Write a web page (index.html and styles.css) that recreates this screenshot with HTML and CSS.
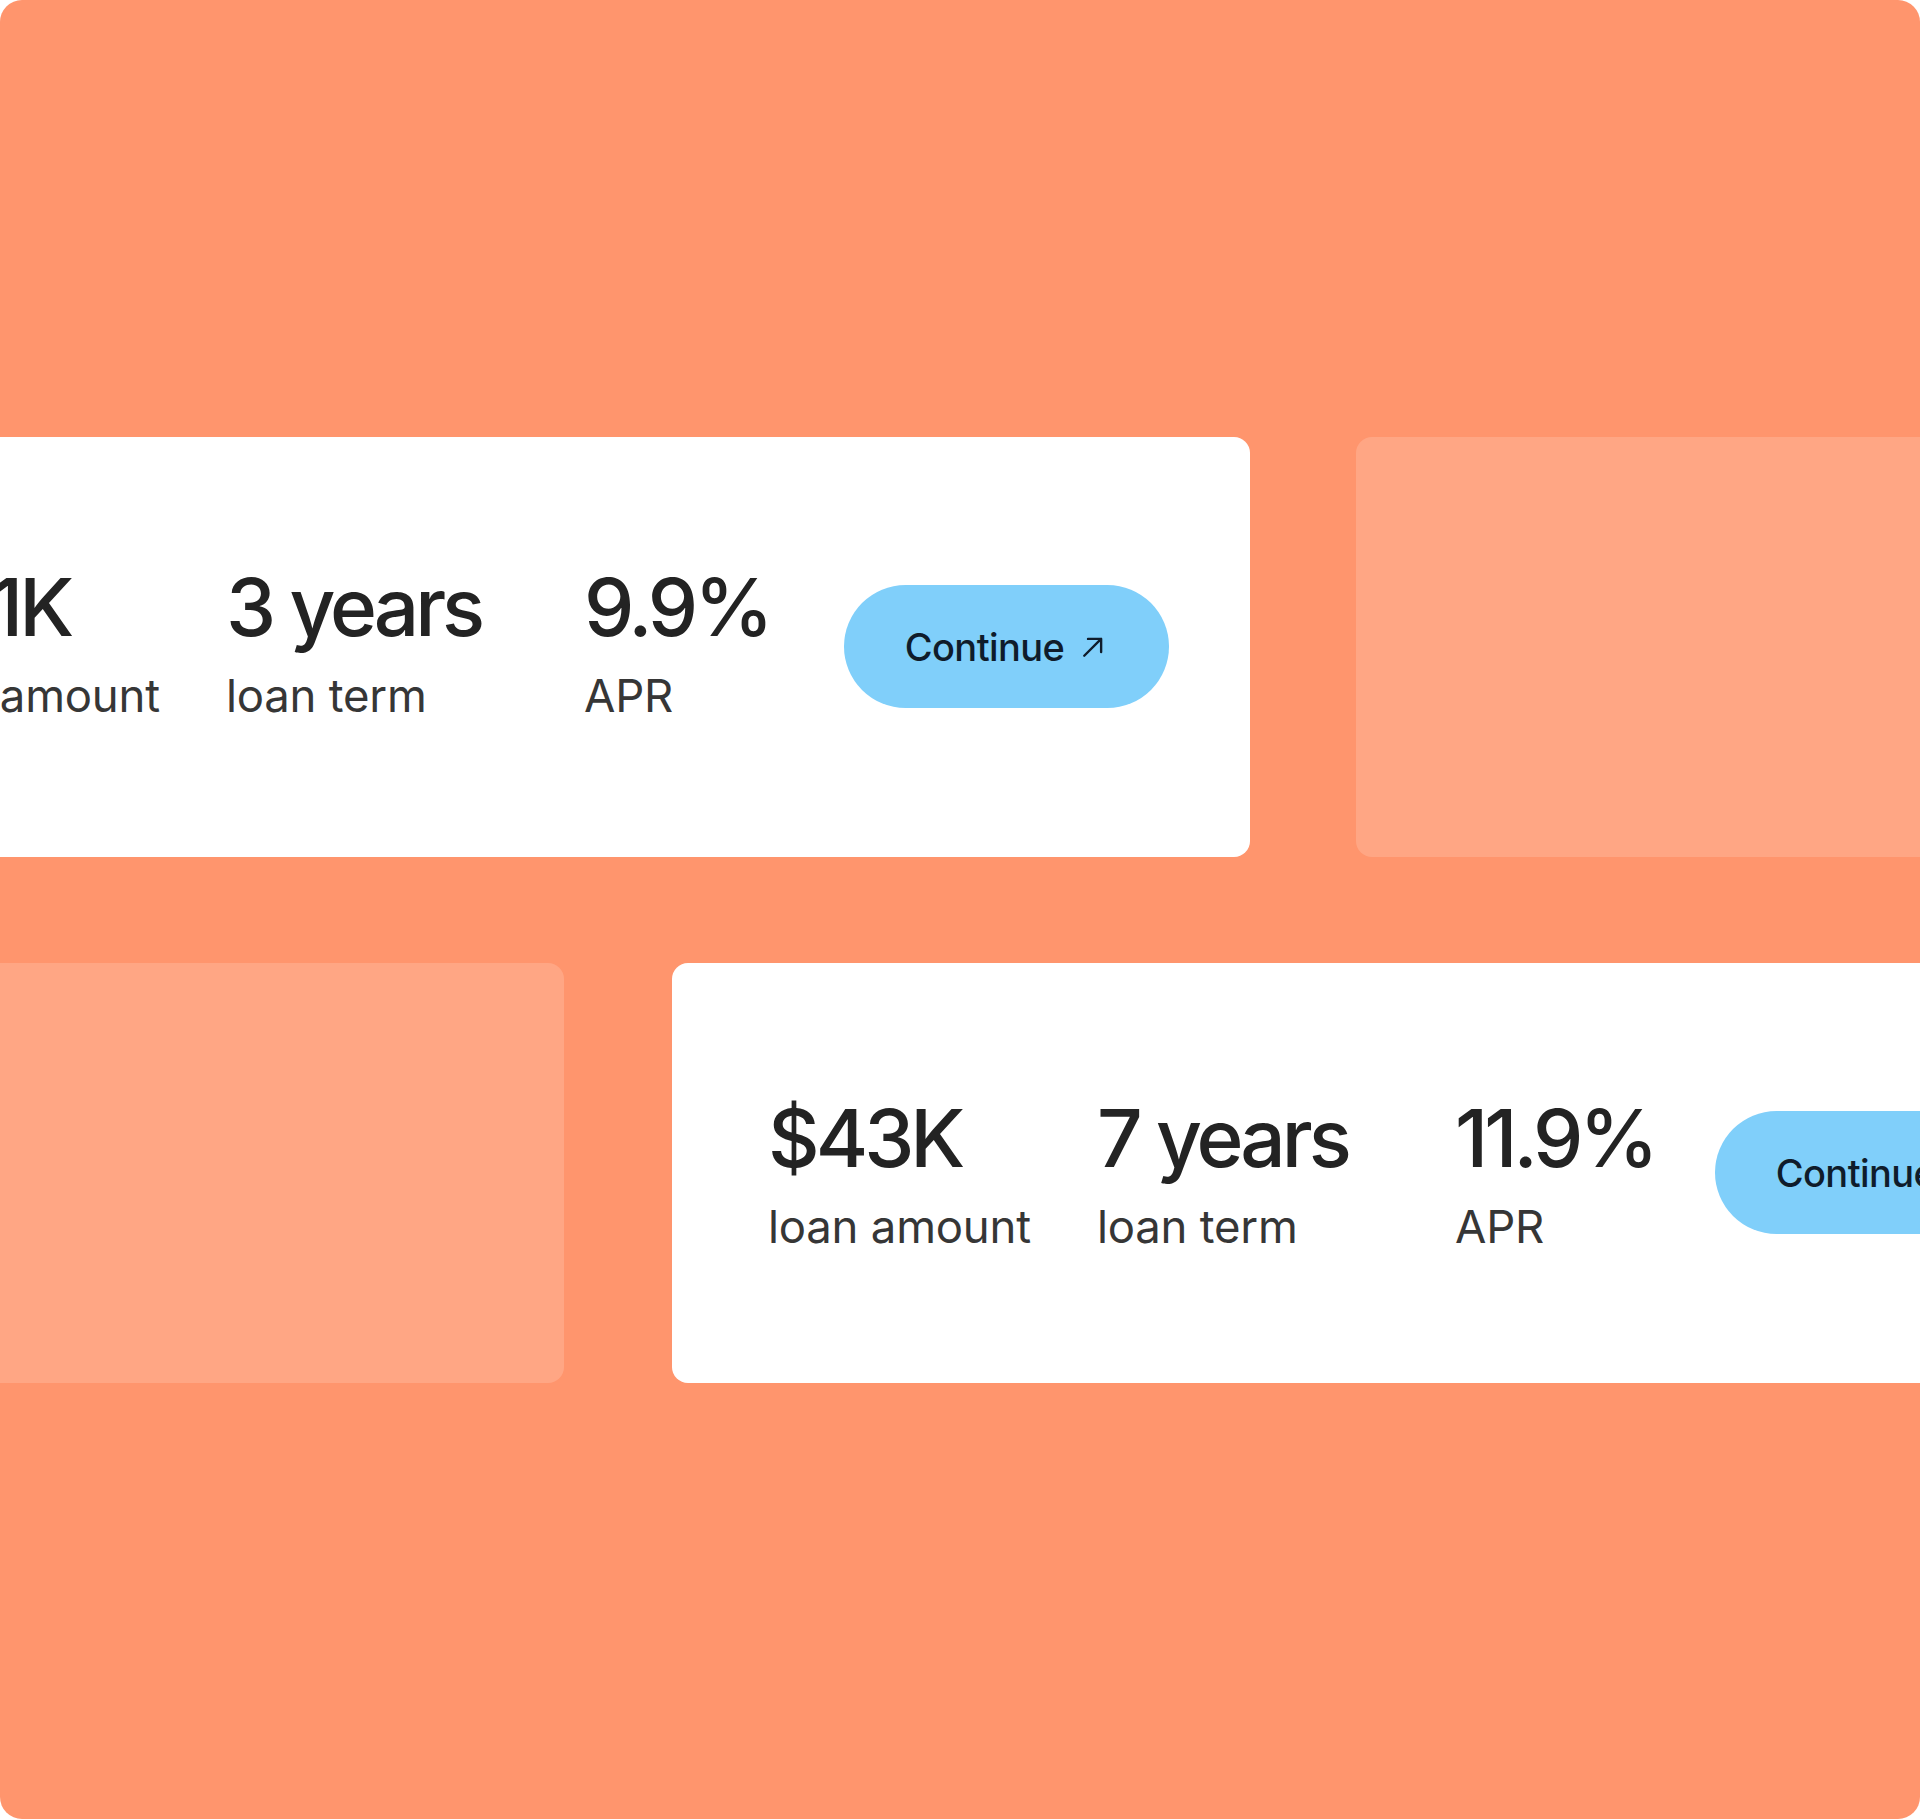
FILE: index.html
```html
<!DOCTYPE html>
<html lang="en">
<head>
<meta charset="utf-8">
<title>Loan offers</title>
<link rel="stylesheet" href="styles.css">
</head>
<body>
<div class="frame">
  <div class="row row-top">
    <div class="card">
      <div class="stat">
        <div class="value">$21K</div>
        <div class="label">loan amount</div>
      </div>
      <div class="stat">
        <div class="value">3 years</div>
        <div class="label">loan term</div>
      </div>
      <div class="stat">
        <div class="value">9.9%</div>
        <div class="label">APR</div>
      </div>
      <button class="btn">Continue <span class="arrow"><svg viewBox="0 0 24 24" width="30" height="30"><path d="M5 19 L18.5 5.5 M8 5.5 H18.5 V16" fill="none" stroke="currentColor" stroke-width="1.9" stroke-linecap="round" stroke-linejoin="round"/></svg></span></button>
    </div>
    <div class="ghost"></div>
  </div>
  <div class="row row-bottom">
    <div class="ghost"></div>
    <div class="card card-low">
      <div class="stat">
        <div class="value">$43K</div>
        <div class="label">loan amount</div>
      </div>
      <div class="stat">
        <div class="value">7 years</div>
        <div class="label">loan term</div>
      </div>
      <div class="stat">
        <div class="value">11.9%</div>
        <div class="label">APR</div>
      </div>
      <button class="btn">Continue <span class="arrow"><svg viewBox="0 0 24 24" width="30" height="30"><path d="M5 19 L18.5 5.5 M8 5.5 H18.5 V16" fill="none" stroke="currentColor" stroke-width="1.9" stroke-linecap="round" stroke-linejoin="round"/></svg></span></button>
    </div>
  </div>
</div>
</body>
</html>
```
FILE: styles.css
```css
html, body {
  margin: 0;
  padding: 0;
  background: #ffffff;
}

body {
  font-family: "Inter", "Liberation Sans", Arial, sans-serif;
  color: #222222;
}

.frame {
  width: 1920px;
  height: 1819px;
  background: #ff956d;
  border-radius: 22px;
  overflow: hidden;
  display: flex;
  flex-direction: column;
  justify-content: center;
  gap: 106px;
}

.row {
  display: flex;
  height: 420px;
  flex-shrink: 0;
}

.row-top {
  gap: 106px;
  margin-left: -199px;
}

.row-bottom {
  gap: 108px;
  margin-left: -236px;
}

.card {
  flex: 0 0 1449px;
  height: 420px;
  box-sizing: border-box;
  background: #ffffff;
  border-radius: 16px;
  padding-left: 96px;
  display: grid;
  grid-template-columns: 329px 358px 260px max-content;
  align-items: center;
}

.ghost {
  flex: 0 0 800px;
  height: 420px;
  border-radius: 16px;
  background: rgba(255, 255, 255, 0.16);
}

.stat {
  display: flex;
  flex-direction: column;
  gap: 22px;
  white-space: nowrap;
  margin-top: -4px;
}

.card-low .stat {
  margin-top: 6px;
}

.value {
  font-size: 80px;
  line-height: 80px;
  font-weight: 500;
  letter-spacing: -0.05em;
  color: #232323;
}

.label {
  font-size: 45.5px;
  line-height: 53px;
  font-weight: 400;
  letter-spacing: -0.005em;
  color: #363636;
}

.btn {
  width: 325px;
  height: 123px;
  border: none;
  border-radius: 62px;
  background: #80cffa;
  color: #0f1c2b;
  font-family: "Inter", "Liberation Sans", Arial, sans-serif;
  font-size: 38px;
  font-weight: 500;
  letter-spacing: -0.015em;
  display: flex;
  align-items: center;
  justify-content: center;
  gap: 14px;
  padding: 0;
}

.arrow {
  display: flex;
  align-items: center;
}
```
